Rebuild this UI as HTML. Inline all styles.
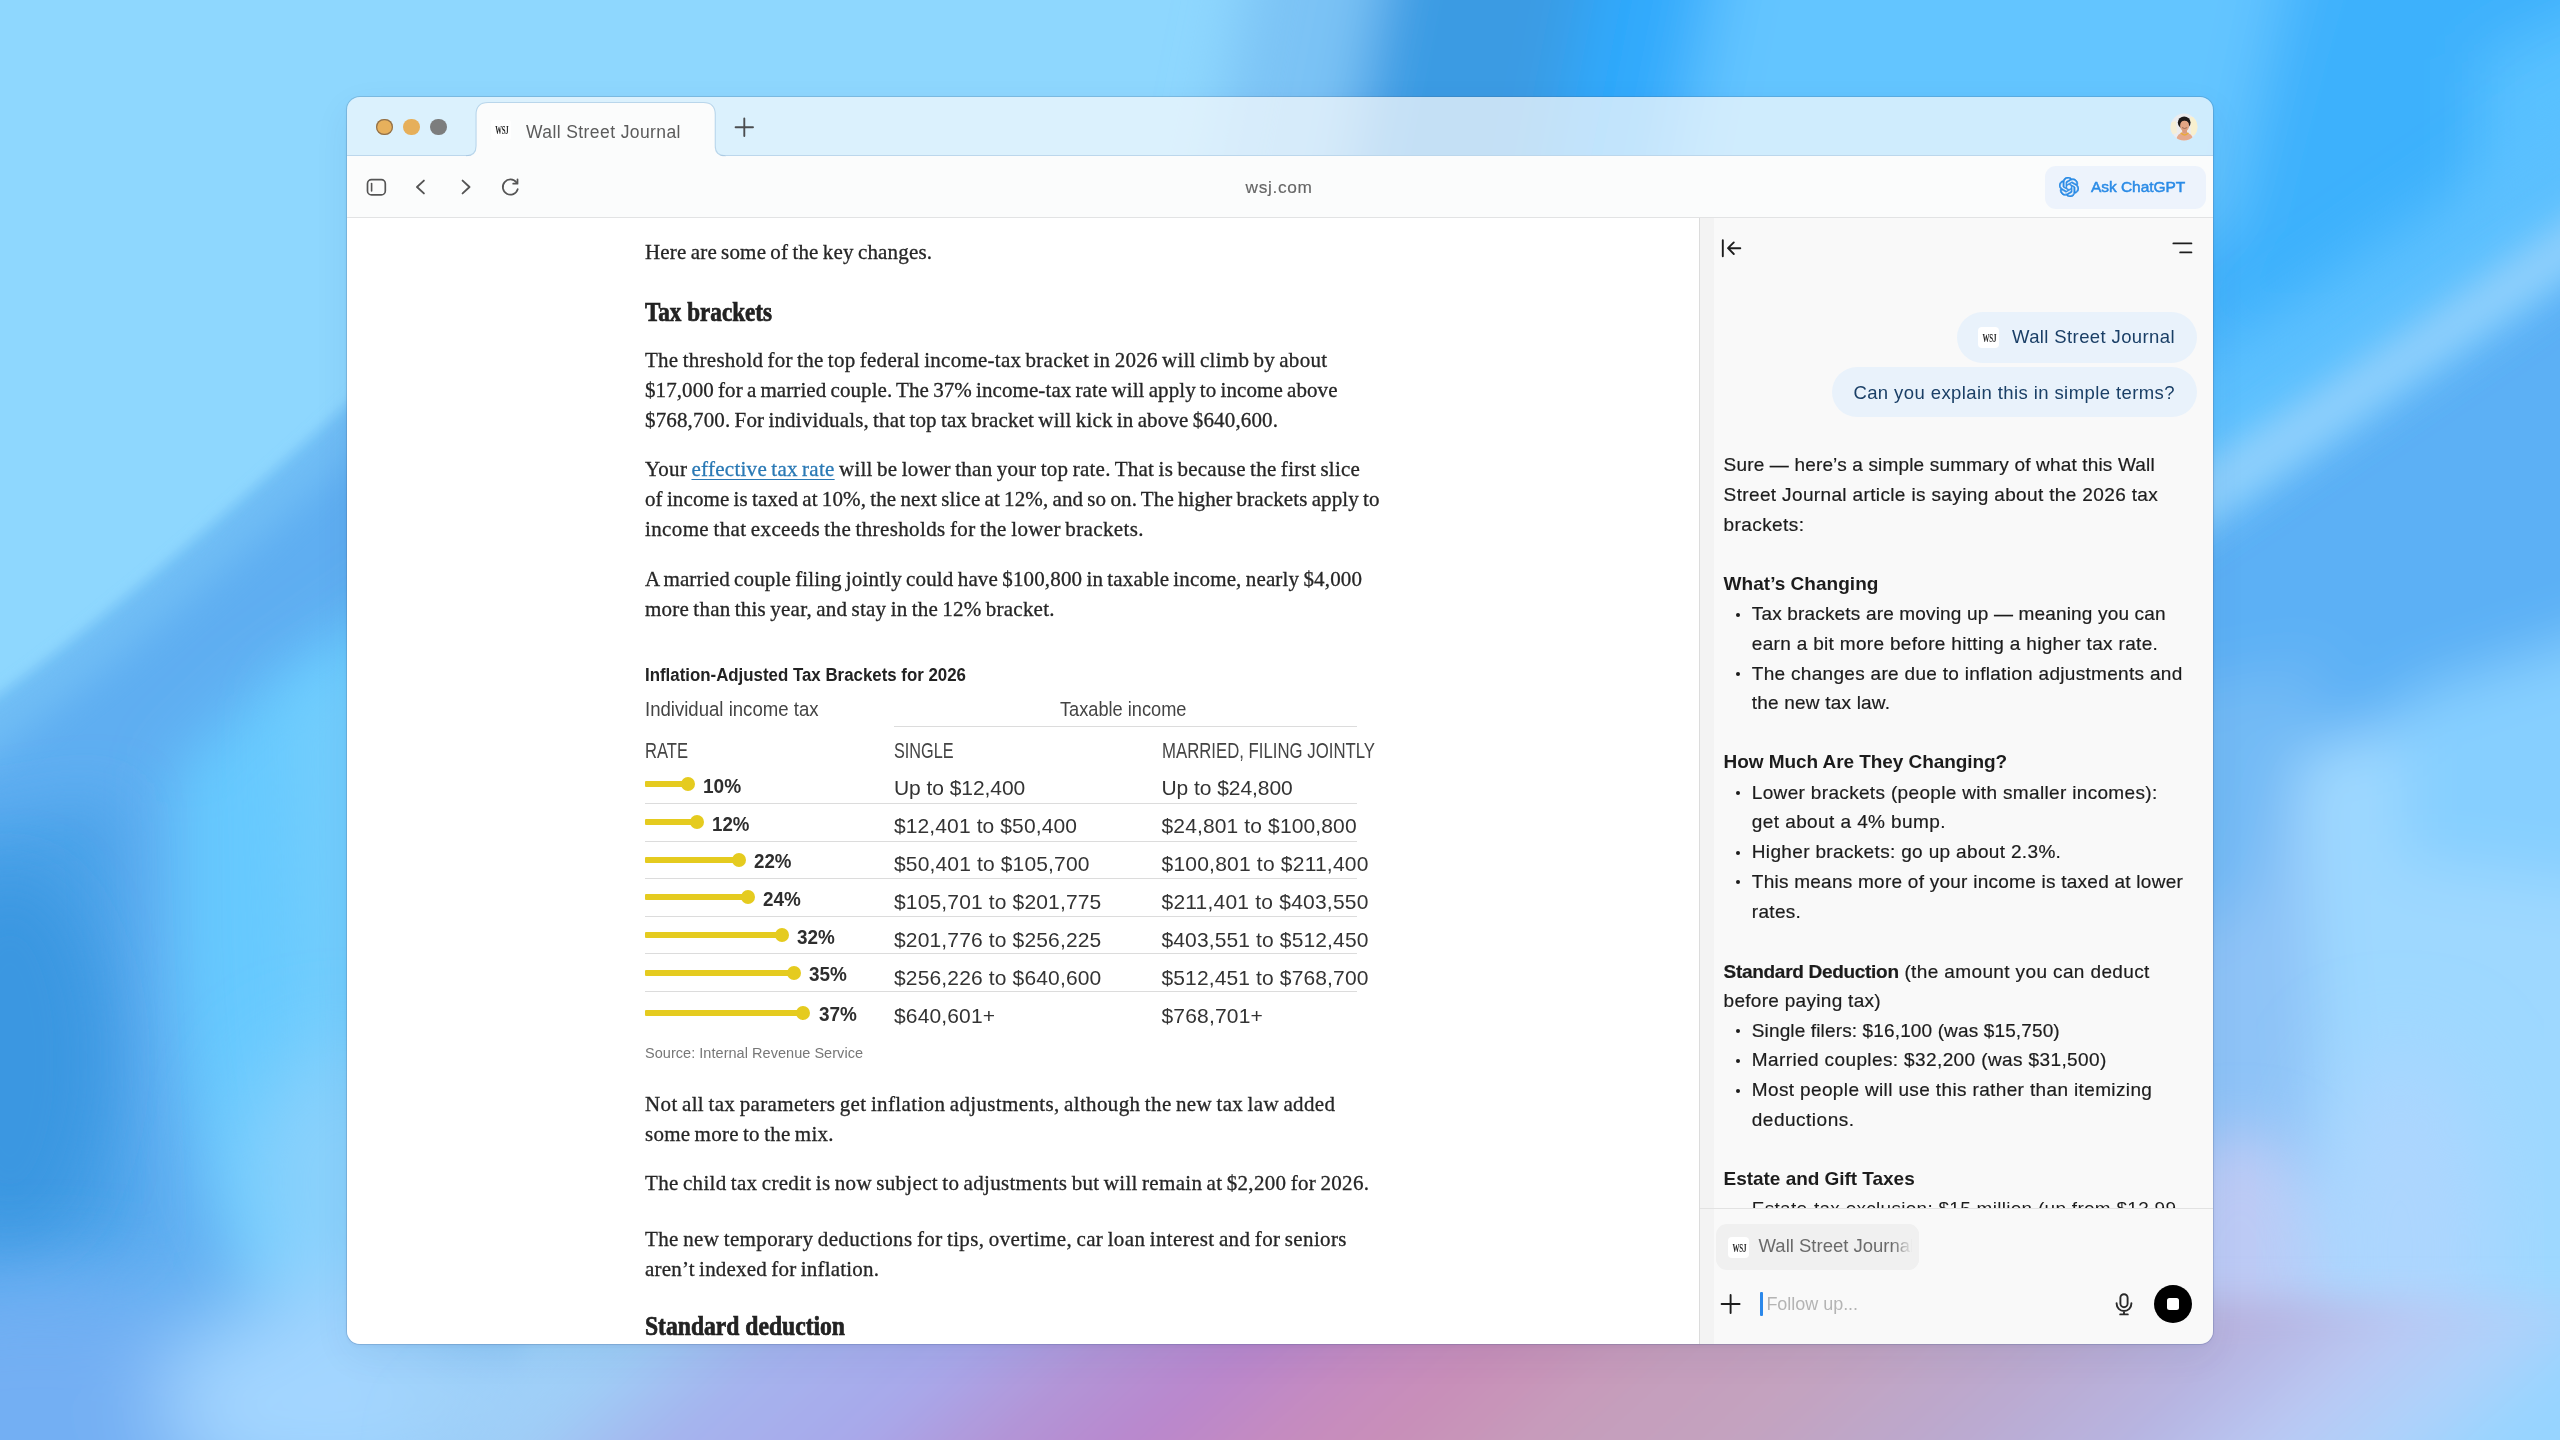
<!DOCTYPE html>
<html lang="en">
<head>
<meta charset="utf-8">
<title>Wall Street Journal</title>
<style>
html,body{margin:0;padding:0;width:2560px;height:1440px;overflow:hidden;background:#8ed7fe;}
body{position:relative;font-family:"Liberation Sans",sans-serif;}
#bg{position:absolute;left:0;top:0;width:2560px;height:1440px;}
#win{will-change:transform;position:absolute;left:347px;top:97px;width:1866px;height:1247px;border-radius:13px;overflow:hidden;background:transparent;
 box-shadow:0 0 0 1px rgba(60,90,130,.22),0 12px 36px rgba(20,50,110,.07),0 2px 6px rgba(20,50,110,.05);}
#stage{position:absolute;left:-347px;top:-97px;width:2560px;height:1440px;}
#stage>*,#stage .abs,.grp>*{position:absolute;}
.grp{left:0;top:0;width:0;height:0;margin:0;}
.l{position:absolute;white-space:pre;transform-origin:0 50%;margin:0;}
.sf{font-family:"Liberation Serif",serif;}
.ss{font-family:"Liberation Sans",sans-serif;}
.l a{color:#2a79b5;-webkit-text-stroke-color:#2a79b5;text-decoration:underline;text-decoration-thickness:1px;text-underline-offset:3px;}
#tabbar{left:347px;top:97px;width:1866px;height:59px;background:rgba(250,251,252,.72);}
#tabline{left:347px;top:155px;width:1866px;height:1px;background:#bcd7ec;}
#toolbar{left:347px;top:156px;width:1866px;height:61px;background:#fbfcfc;}
#toolline{left:347px;top:217px;width:1866px;height:1px;background:#e2e3e4;}
#page{left:347px;top:218px;width:1352px;height:1126px;background:#fff;}
#panel{left:1700px;top:218px;width:513px;height:1126px;background:#f9f9f9;}
#panedge{left:1699px;top:218px;width:1px;height:1126px;background:#dcdcdc;}
#panband{left:1700px;top:218px;width:14px;height:1126px;background:#f3f3f3;}
.dot{position:absolute;width:16.6px;height:16.6px;border-radius:50%;top:118.7px;}
.fav{position:absolute;background:#fff;border-radius:3px;font-family:"Liberation Serif",serif;font-weight:700;color:#222;text-align:center;letter-spacing:-.3px;transform-origin:50% 50%;}
.fav span{display:inline-block;transform:scaleX(.56);margin-left:-1.5px;}
.chip{position:absolute;background:#e9f2fb;border-radius:26px;}
.hl{position:absolute;height:1px;background:#dcdcdc;left:645px;width:712px;}
.bar{position:absolute;left:645px;height:6px;background:#e5cb1f;border-radius:1px;}
.knob{position:absolute;width:14px;height:14px;border-radius:50%;background:#e5cb1f;}
.bu{position:absolute;left:1735.5px;width:4px;height:4px;border-radius:50%;background:#1c1c1c;}
#clip{left:1700px;top:218px;width:513px;height:990px;overflow:hidden;}
#clip>div{position:absolute;left:-1700px;top:-218px;width:2560px;height:1440px;}
</style>
</head>
<body>
<svg id="bg" width="2560" height="1440" viewBox="0 0 2560 1440" preserveAspectRatio="none">
<defs>
<filter id="b45" x="-30%" y="-30%" width="160%" height="160%"><feGaussianBlur stdDeviation="45"/></filter>
<filter id="b30" x="-30%" y="-30%" width="160%" height="160%"><feGaussianBlur stdDeviation="30"/></filter>
<filter id="b18" x="-30%" y="-30%" width="160%" height="160%"><feGaussianBlur stdDeviation="18"/></filter>
<filter id="b7" x="-30%" y="-30%" width="160%" height="160%"><feGaussianBlur stdDeviation="7"/></filter>
<linearGradient id="bot" x1="400" y1="1392" x2="1377" y2="2467" gradientUnits="userSpaceOnUse">
<stop offset="0.000" stop-color="#a0d2fd" stop-opacity="0"/>
<stop offset="0.086" stop-color="#9fcdf6"/>
<stop offset="0.148" stop-color="#a5b4ee"/>
<stop offset="0.238" stop-color="#a8a8ea"/>
<stop offset="0.305" stop-color="#b394d6"/>
<stop offset="0.367" stop-color="#b987cd"/>
<stop offset="0.429" stop-color="#c58bc0"/>
<stop offset="0.486" stop-color="#c98fb8"/>
<stop offset="0.558" stop-color="#c69dbb"/>
<stop offset="0.649" stop-color="#c3a3c0"/>
<stop offset="0.739" stop-color="#bba9cf"/>
<stop offset="0.830" stop-color="#b7b5e2"/>
<stop offset="0.894" stop-color="#b9c9f4"/>
<stop offset="0.949" stop-color="#add2fb"/>
<stop offset="1" stop-color="#97d4ff"/>
</linearGradient>
</defs>
<rect width="2560" height="1440" fill="#8ed7fe"/>
<!-- left: region below the diagonal edge -->
<path d="M-60 735 C40 672 190 552 420 338 L520 338 L520 1500 L-60 1500Z" fill="#70bdf5" filter="url(#b7)"/>
<path d="M-60 790 C40 726 190 606 420 396 L520 396 L520 1500 L-60 1500Z" fill="#5eaef1" filter="url(#b18)"/>
<path d="M175 770 L260 690 L520 510 L520 1300 L270 1300 Q170 1150 175 900Z" fill="#66c9fe" filter="url(#b30)"/>
<path d="M285 700 L520 560 L520 1120 L300 1120Z" fill="#72cdfd" filter="url(#b30)"/>
<path d="M-60 830 L115 800 L135 1250 L-60 1290Z" fill="#49a1e8" filter="url(#b30)"/>
<ellipse cx="10" cy="1060" rx="92" ry="185" fill="#3a97e1" filter="url(#b30)"/>
<g filter="url(#b45)">
<ellipse cx="40" cy="1435" rx="260" ry="150" fill="#73aff3"/>
<ellipse cx="345" cy="1180" rx="105" ry="130" fill="#8ad1fc"/>
<ellipse cx="350" cy="1400" rx="190" ry="115" fill="#a3d5ff"/>
<ellipse cx="540" cy="1410" rx="150" ry="90" fill="#a0d1f8"/>
</g>
<!-- top right -->
<g filter="url(#b30)">
<path d="M1470 -80 L2700 -80 L2700 420 L2120 420 L2120 230 L1380 230Z" fill="#48b5fd"/>
<path d="M1260 -80 L1400 -80 L1340 230 L1200 230Z" fill="#7cc3f5"/><path d="M1395 -80 L1600 -80 L1540 230 L1335 230Z" fill="#3b9be3"/>
<path d="M1600 -80 L1700 -80 L1640 230 L1540 230Z" fill="#2fa9fc"/>
<path d="M1740 -80 L2290 -80 L2230 230 L1680 230Z" fill="#63c5ff"/>
<path d="M2330 -80 L2700 -80 L2700 330 L2200 330Z" fill="#3db1fc"/>
<path d="M2480 60 L2700 -40 L2700 420 L2480 420Z" fill="#58c1ff"/>
</g>
<!-- right side -->
<g filter="url(#b30)">
<path d="M2120 545 L2700 150 L2700 700 L2120 790Z" fill="#5cb0f5"/>
<path d="M2120 800 L2700 640 L2700 1600 L2120 1600Z" fill="#9ed8ff"/>
<path d="M2120 800 L2300 760 L2330 1200 L2120 1200Z" fill="#8ec3f7"/>
<path d="M2120 700 L2330 660 L2250 900 L2120 960Z" fill="#72baf5"/>
<path d="M2400 700 L2700 600 L2700 900 L2400 860Z" fill="#86cfff"/>
</g>
<path d="M2150 400 L2620 80 L2620 215 L2150 535Z" fill="#5cc0fe" filter="url(#b30)"/>
<path d="M2150 503 L2620 183 L2620 243 L2150 563Z" fill="#90d0fc" filter="url(#b18)"/>
<ellipse cx="2240" cy="1340" rx="110" ry="210" fill="#bccaf5" filter="url(#b30)"/>
<ellipse cx="2400" cy="1250" rx="90" ry="200" fill="#add6fe" filter="url(#b45)"/>
<!-- bottom band -->
<rect x="400" y="1300" width="2260" height="200" fill="url(#bot)" filter="url(#b18)"/>
</svg>

<div id="win"><div id="stage">
<div id="tabbar"></div>
<div id="toolbar"></div>
<div id="tabline"></div>
<svg class="abs" style="left:456px;top:97px" width="280" height="60" viewBox="456 97 280 60"><path d="M466 156.3 Q476.6 156.3 476.6 146 V114.5 Q476.6 103 488.1 103 H703.2 Q714.7 103 714.7 114.5 V146 Q714.7 156.3 725.3 156.3" fill="none" stroke="#9dbfdc" stroke-opacity=".55" stroke-width="2.2"/><path d="M466 157 V156.3 Q476.6 156.3 476.6 146 V114.5 Q476.6 103 488.1 103 H703.2 Q714.7 103 714.7 114.5 V146 Q714.7 156.3 725.3 156.3 V157 Z" fill="#fbfcfc"/></svg>
<div id="toolline"></div>
<div class="dot" style="left:376.3px;background:#e7b05c;box-shadow:inset 0 0 0 1.2px rgba(120,95,70,.8)"></div>
<div class="dot" style="left:403.2px;background:#e6af5a"></div>
<div class="dot" style="left:430.3px;background:#7c7d7d"></div>
<div class="fav" style="left:491px;top:120px;width:20px;height:20px;font-size:12px;line-height:21px"><span>WSJ</span></div>
<svg class="abs" style="left:733px;top:116px" width="23" height="23" viewBox="0 0 23 23"><path d="M2.6 11.2H20M11.3 2.5V20" stroke="#4b4d50" stroke-width="1.9" stroke-linecap="round" fill="none"/></svg>
<!-- avatar -->
<svg class="abs" style="left:2169.5px;top:113.3px" width="28" height="28" viewBox="0 0 28 28"><defs><clipPath id="av"><circle cx="14" cy="14" r="13.4"/></clipPath></defs><g clip-path="url(#av)"><rect width="28" height="28" fill="#ececee"/><path d="M20 4 L28 4 L28 22 L21 22Z" fill="#f8f0cf"/><path d="M0 10 L6 8 L7 20 L0 22Z" fill="#f5eed6"/><ellipse cx="14.2" cy="9.6" rx="6.4" ry="6.2" fill="#1f1a1a"/><ellipse cx="14.6" cy="12.8" rx="4.5" ry="5.6" fill="#e3a584"/><path d="M9.8 9.6 Q14 5.4 19 9.4 Q18.6 5 14.2 4.6 Q10 5 9.8 9.6Z" fill="#1f1a1a"/><path d="M6 28 Q6.5 19.6 14.6 19.4 Q22.8 19.6 23.6 28Z" fill="#e5a98c"/><rect x="12.2" y="16.4" width="4.8" height="4" fill="#dc9c7c"/><path d="M10.8 19.8 Q14.6 24.2 18.4 19.8" fill="none" stroke="#e9a93a" stroke-width="1.5"/><path d="M12 14.6 Q14.6 16.4 17.2 14.6" fill="none" stroke="#8a5a48" stroke-width=".8"/></g></svg>
<!-- toolbar icons -->
<svg class="abs" style="left:364px;top:175px" width="26" height="24" viewBox="0 0 26 24"><rect x="3.5" y="4.7" width="17.8" height="15.2" rx="4" fill="none" stroke="#555" stroke-width="1.7"/><path d="M7.6 8.6V16" stroke="#555" stroke-width="1.6" stroke-linecap="round"/></svg>
<svg class="abs" style="left:410px;top:175px" width="22" height="24" viewBox="0 0 22 24"><path d="M13.9 5.6 L7 12 L13.9 18.4" fill="none" stroke="#555" stroke-width="1.9" stroke-linecap="round" stroke-linejoin="round"/></svg>
<svg class="abs" style="left:455px;top:175px" width="22" height="24" viewBox="0 0 22 24"><path d="M7.6 5.6 L14.5 12 L7.6 18.4" fill="none" stroke="#555" stroke-width="1.9" stroke-linecap="round" stroke-linejoin="round"/></svg>
<svg class="abs" style="left:499px;top:175px" width="24" height="24" viewBox="0 0 24 24"><path d="M18.7 14.2 A7.6 7.6 0 1 1 17.5 7.5" fill="none" stroke="#555" stroke-width="1.75" stroke-linecap="round"/><path d="M18.5 4.3 V8.7 H14.2" fill="none" stroke="#555" stroke-width="1.75" stroke-linecap="round" stroke-linejoin="round"/></svg>
<div class="abs" style="left:2044.5px;top:165.5px;width:161px;height:43px;border-radius:11px;background:#edf3fc"></div>
<svg class="abs" style="left:2059.2px;top:177.4px" width="20" height="20" viewBox="0 0 24 24"><path fill="#2b8be6" stroke="#2b8be6" stroke-width=".7" d="M22.2819 9.8211a5.9847 5.9847 0 0 0-.5157-4.9108 6.0462 6.0462 0 0 0-6.5098-2.9A6.0651 6.0651 0 0 0 4.9807 4.1818a5.9847 5.9847 0 0 0-3.9977 2.9 6.0462 6.0462 0 0 0 .7427 7.0966 5.98 5.98 0 0 0 .511 4.9107 6.051 6.051 0 0 0 6.5146 2.9001A5.9847 5.9847 0 0 0 13.2599 24a6.0557 6.0557 0 0 0 5.7718-4.2058 5.9894 5.9894 0 0 0 3.9977-2.9001 6.0557 6.0557 0 0 0-.7475-7.0729zm-9.022 12.6081a4.4755 4.4755 0 0 1-2.8764-1.0408l.1419-.0804 4.7783-2.7582a.7948.7948 0 0 0 .3927-.6813v-6.7369l2.02 1.1686a.071.071 0 0 1 .038.0615v5.5826a4.504 4.504 0 0 1-4.4945 4.4849zm-9.6607-4.1254a4.4708 4.4708 0 0 1-.5346-3.0137l.142.0852 4.783 2.7582a.7712.7712 0 0 0 .7806 0l5.8428-3.3685v2.3324a.0804.0804 0 0 1-.0332.0615L9.74 19.9502a4.4992 4.4992 0 0 1-6.1408-1.6464zM2.3408 7.8956a4.485 4.485 0 0 1 2.3655-1.9728V11.6a.7664.7664 0 0 0 .3879.6765l5.8144 3.3543-2.0201 1.1685a.0757.0757 0 0 1-.071 0l-4.8303-2.7865A4.504 4.504 0 0 1 2.3408 7.872zm16.5963 3.8558L13.1038 8.364 15.1192 7.2a.0757.0757 0 0 1 .071 0l4.8303 2.7913a4.4944 4.4944 0 0 1-.6765 8.1042v-5.6772a.79.79 0 0 0-.407-.667zm2.0107-3.0231l-.142-.0852-4.7735-2.7818a.7759.7759 0 0 0-.7854 0L9.409 9.2297V6.8974a.0662.0662 0 0 1 .0284-.0615l4.8303-2.7866a4.4992 4.4992 0 0 1 6.6802 4.66zM8.3065 12.863l-2.02-1.1638a.0804.0804 0 0 1-.038-.0567V6.0742a4.4992 4.4992 0 0 1 7.3757-3.4537l-.142.0805L8.704 5.459a.7948.7948 0 0 0-.3927.6813zm1.0976-2.3654l2.602-1.4998 2.6069 1.4998v2.9994l-2.5974 1.4997-2.6067-1.4997Z"/></svg>
<div class="l ss" style="left:526.0px;top:120.0px;font-size:17.5px;line-height:24px;color:#5b5b5b;letter-spacing:0.406px;">Wall Street Journal</div>
<div class="l ss" style="left:1245.5px;top:175.0px;font-size:17.3px;line-height:24px;color:#666;letter-spacing:0.680px;-webkit-text-stroke:.15px #666;">wsj.com</div>
<div class="l ss" style="left:2091.0px;top:176.0px;font-size:15.5px;line-height:22px;color:#2b8be6;letter-spacing:-0.055px;-webkit-text-stroke:.5px #2b8be6;">Ask ChatGPT</div>
<div id="page"></div>
<article class="grp">
<div class="l sf" style="left:645.0px;top:238.0px;font-size:21px;line-height:29px;color:#262626;letter-spacing:0.174px;word-spacing:-1.2px;-webkit-text-stroke:.3px #262626;">Here are some of the key changes.</div>
<div class="l sf" style="left:645.0px;top:293.0px;font-size:27px;line-height:38px;color:#222;font-weight:700;transform:scaleX(0.8566);-webkit-text-stroke:.7px #222;">Tax brackets</div>
<div class="l sf" style="left:645.0px;top:346.0px;font-size:21px;line-height:29px;color:#262626;letter-spacing:0.260px;word-spacing:-1.2px;-webkit-text-stroke:.3px #262626;">The threshold for the top federal income-tax bracket in 2026 will climb by about</div>
<div class="l sf" style="left:645.0px;top:376.0px;font-size:21px;line-height:29px;color:#262626;letter-spacing:0.088px;word-spacing:-1.2px;-webkit-text-stroke:.3px #262626;">$17,000 for a married couple. The 37% income-tax rate will apply to income above</div>
<div class="l sf" style="left:645.0px;top:406.0px;font-size:21px;line-height:29px;color:#262626;letter-spacing:0.155px;word-spacing:-1.2px;-webkit-text-stroke:.3px #262626;">$768,700. For individuals, that top tax bracket will kick in above $640,600.</div>
<div class="l sf" style="left:645.0px;top:455.0px;font-size:21px;line-height:29px;color:#262626;letter-spacing:0.271px;word-spacing:-1.2px;-webkit-text-stroke:.3px #262626;">Your <a>effective tax rate</a> will be lower than your top rate. That is because the first slice</div>
<div class="l sf" style="left:645.0px;top:485.0px;font-size:21px;line-height:29px;color:#262626;letter-spacing:0.121px;word-spacing:-1.2px;-webkit-text-stroke:.3px #262626;">of income is taxed at 10%, the next slice at 12%, and so on. The higher brackets apply to</div>
<div class="l sf" style="left:645.0px;top:515.0px;font-size:21px;line-height:29px;color:#262626;letter-spacing:0.372px;word-spacing:-1.2px;-webkit-text-stroke:.3px #262626;">income that exceeds the thresholds for the lower brackets.</div>
<div class="l sf" style="left:645.0px;top:565.0px;font-size:21px;line-height:29px;color:#262626;letter-spacing:0.162px;word-spacing:-1.2px;-webkit-text-stroke:.3px #262626;">A married couple filing jointly could have $100,800 in taxable income, nearly $4,000</div>
<div class="l sf" style="left:645.0px;top:595.0px;font-size:21px;line-height:29px;color:#262626;letter-spacing:0.233px;word-spacing:-1.2px;-webkit-text-stroke:.3px #262626;">more than this year, and stay in the 12% bracket.</div>
<div class="l sf" style="left:645.0px;top:1090.0px;font-size:21px;line-height:29px;color:#262626;letter-spacing:0.361px;word-spacing:-1.2px;-webkit-text-stroke:.3px #262626;">Not all tax parameters get inflation adjustments, although the new tax law added</div>
<div class="l sf" style="left:645.0px;top:1120.0px;font-size:21px;line-height:29px;color:#262626;letter-spacing:0.245px;word-spacing:-1.2px;-webkit-text-stroke:.3px #262626;">some more to the mix.</div>
<div class="l sf" style="left:645.0px;top:1169.0px;font-size:21px;line-height:29px;color:#262626;letter-spacing:0.310px;word-spacing:-1.2px;-webkit-text-stroke:.3px #262626;">The child tax credit is now subject to adjustments but will remain at $2,200 for 2026.</div>
<div class="l sf" style="left:645.0px;top:1225.0px;font-size:21px;line-height:29px;color:#262626;letter-spacing:0.372px;word-spacing:-1.2px;-webkit-text-stroke:.3px #262626;">The new temporary deductions for tips, overtime, car loan interest and for seniors</div>
<div class="l sf" style="left:645.0px;top:1255.0px;font-size:21px;line-height:29px;color:#262626;letter-spacing:0.210px;word-spacing:-1.2px;-webkit-text-stroke:.3px #262626;">aren’t indexed for inflation.</div>
<div class="l sf" style="left:645.0px;top:1307.0px;font-size:27px;line-height:38px;color:#222;font-weight:700;transform:scaleX(0.8740);-webkit-text-stroke:.7px #222;">Standard deduction</div>
</article>
<section class="grp" id="tax-table">
<div class="hl" style="left:893.5px;width:463px;top:725.5px"></div>
<div class="hl" style="top:803px"></div>
<div class="hl" style="top:841px"></div>
<div class="hl" style="top:878px"></div>
<div class="hl" style="top:916px"></div>
<div class="hl" style="top:953px"></div>
<div class="hl" style="top:991px"></div>
<div class="bar" style="top:781.3px;width:43.0px"></div><div class="knob" style="left:681.0px;top:777.3px"></div>
<div class="bar" style="top:818.8px;width:51.8px"></div><div class="knob" style="left:689.8px;top:814.8px"></div>
<div class="bar" style="top:856.5px;width:93.9px"></div><div class="knob" style="left:731.9px;top:852.5px"></div>
<div class="bar" style="top:894.4px;width:103.0px"></div><div class="knob" style="left:741.0px;top:890.4px"></div>
<div class="bar" style="top:932.0px;width:136.8px"></div><div class="knob" style="left:774.8px;top:928.0px"></div>
<div class="bar" style="top:969.6px;width:149.2px"></div><div class="knob" style="left:787.2px;top:965.6px"></div>
<div class="bar" style="top:1009.9px;width:158.0px"></div><div class="knob" style="left:796.0px;top:1005.9px"></div>
<div class="l ss" style="left:645.0px;top:663.0px;font-size:17.6px;line-height:25px;color:#222;font-weight:700;transform:scaleX(0.9581);">Inflation-Adjusted Tax Brackets for 2026</div>
<div class="l ss" style="left:645.0px;top:696.0px;font-size:19.3px;line-height:27px;color:#444;transform:scaleX(0.9636);">Individual income tax</div>
<div class="l ss" style="left:1060.0px;top:696.0px;font-size:19.3px;line-height:27px;color:#444;transform:scaleX(0.9441);">Taxable income</div>
<div class="l ss" style="left:645.0px;top:736.0px;font-size:21.5px;line-height:30px;color:#444;transform:scaleX(0.7713);">RATE</div>
<div class="l ss" style="left:894.0px;top:736.0px;font-size:21.5px;line-height:30px;color:#444;transform:scaleX(0.7544);">SINGLE</div>
<div class="l ss" style="left:1161.5px;top:736.0px;font-size:21.5px;line-height:30px;color:#444;transform:scaleX(0.7797);">MARRIED, FILING JOINTLY</div>
<div class="l ss" style="left:702.8px;top:772.0px;font-size:20px;line-height:28px;color:#2e2e2e;font-weight:700;transform:scaleX(0.9543);">10%</div>
<div class="l ss" style="left:894.0px;top:773.0px;font-size:21px;line-height:29px;color:#333;letter-spacing:-0.053px;">Up to $12,400</div>
<div class="l ss" style="left:1161.5px;top:773.0px;font-size:21px;line-height:29px;color:#333;letter-spacing:-0.053px;">Up to $24,800</div>
<div class="l ss" style="left:711.6px;top:810.0px;font-size:20px;line-height:28px;color:#2e2e2e;font-weight:700;transform:scaleX(0.9343);">12%</div>
<div class="l ss" style="left:894.0px;top:811.0px;font-size:21px;line-height:29px;color:#333;letter-spacing:0.111px;">$12,401 to $50,400</div>
<div class="l ss" style="left:1161.5px;top:811.0px;font-size:21px;line-height:29px;color:#333;letter-spacing:0.134px;">$24,801 to $100,800</div>
<div class="l ss" style="left:753.8px;top:847.0px;font-size:20px;line-height:28px;color:#2e2e2e;font-weight:700;transform:scaleX(0.9368);">22%</div>
<div class="l ss" style="left:894.0px;top:849.0px;font-size:21px;line-height:29px;color:#333;letter-spacing:0.151px;">$50,401 to $105,700</div>
<div class="l ss" style="left:1161.5px;top:849.0px;font-size:21px;line-height:29px;color:#333;letter-spacing:0.215px;">$100,801 to $211,400</div>
<div class="l ss" style="left:762.8px;top:885.0px;font-size:20px;line-height:28px;color:#2e2e2e;font-weight:700;transform:scaleX(0.9443);">24%</div>
<div class="l ss" style="left:894.0px;top:887.0px;font-size:21px;line-height:29px;color:#333;letter-spacing:0.151px;">$105,701 to $201,775</div>
<div class="l ss" style="left:1161.5px;top:887.0px;font-size:21px;line-height:29px;color:#333;letter-spacing:0.215px;">$211,401 to $403,550</div>
<div class="l ss" style="left:796.6px;top:923.0px;font-size:20px;line-height:28px;color:#2e2e2e;font-weight:700;transform:scaleX(0.9443);">32%</div>
<div class="l ss" style="left:894.0px;top:925.0px;font-size:21px;line-height:29px;color:#333;letter-spacing:0.151px;">$201,776 to $256,225</div>
<div class="l ss" style="left:1161.5px;top:925.0px;font-size:21px;line-height:29px;color:#333;letter-spacing:0.133px;">$403,551 to $512,450</div>
<div class="l ss" style="left:809.0px;top:960.0px;font-size:20px;line-height:28px;color:#2e2e2e;font-weight:700;transform:scaleX(0.9468);">35%</div>
<div class="l ss" style="left:894.0px;top:963.0px;font-size:21px;line-height:29px;color:#333;letter-spacing:0.151px;">$256,226 to $640,600</div>
<div class="l ss" style="left:1161.5px;top:963.0px;font-size:21px;line-height:29px;color:#333;letter-spacing:0.133px;">$512,451 to $768,700</div>
<div class="l ss" style="left:819.0px;top:1000.0px;font-size:20px;line-height:28px;color:#2e2e2e;font-weight:700;transform:scaleX(0.9468);">37%</div>
<div class="l ss" style="left:894.0px;top:1001.0px;font-size:21px;line-height:29px;color:#333;letter-spacing:0.143px;">$640,601+</div>
<div class="l ss" style="left:1161.5px;top:1001.0px;font-size:21px;line-height:29px;color:#333;letter-spacing:0.180px;">$768,701+</div>
<div class="l ss" style="left:645.0px;top:1043.0px;font-size:14.5px;line-height:20px;color:#777;letter-spacing:0.038px;">Source: Internal Revenue Service</div>
</section>
<aside class="grp" id="chat-panel">
<div id="panel"></div>
<div id="panband"></div>
<div id="panedge"></div>
<svg class="abs" style="left:1718px;top:236px" width="26" height="24" viewBox="0 0 26 24"><path d="M4.8 4.2V20.2M22.3 12.2H10.2M15.8 6.4 L10 12.2 L15.8 18" fill="none" stroke="#1d1d1d" stroke-width="1.9" stroke-linecap="round" stroke-linejoin="round"/></svg>
<svg class="abs" style="left:2168px;top:236px" width="28" height="24" viewBox="0 0 28 24"><path d="M5.4 7.4H23.4M12.2 16.4H23.4" fill="none" stroke="#1d1d1d" stroke-width="1.9" stroke-linecap="round"/></svg>
<div class="chip" style="left:1957px;top:312px;width:240px;height:50.5px"></div>
<div class="fav" style="left:1978px;top:327px;width:21px;height:21px;font-size:12.5px;line-height:22px;border-radius:4px"><span>WSJ</span></div>
<div class="chip" style="left:1832px;top:366.5px;width:365px;height:50px"></div>
<i class="bu" style="top:612.8px"></i>
<i class="bu" style="top:672.2px"></i>
<i class="bu" style="top:791.2px"></i>
<i class="bu" style="top:850.6px"></i>
<i class="bu" style="top:880.3px"></i>
<i class="bu" style="top:1029.1px"></i>
<i class="bu" style="top:1058.8px"></i>
<i class="bu" style="top:1088.5px"></i>
<div class="l ss" style="left:2012.0px;top:324.0px;font-size:18.5px;line-height:26px;color:#1a3f66;letter-spacing:0.383px;">Wall Street Journal</div>
<div class="l ss" style="left:1853.4px;top:380.0px;font-size:18.5px;line-height:26px;color:#1a3f66;letter-spacing:0.408px;">Can you explain this in simple terms?</div>
<div class="l ss" style="left:1723.6px;top:451.0px;font-size:19px;line-height:27px;color:#1c1c1c;letter-spacing:0.163px;-webkit-text-stroke:.2px #1c1c1c;">Sure — here’s a simple summary of what this Wall</div>
<div class="l ss" style="left:1723.6px;top:481.0px;font-size:19px;line-height:27px;color:#1c1c1c;letter-spacing:0.361px;-webkit-text-stroke:.2px #1c1c1c;">Street Journal article is saying about the 2026 tax</div>
<div class="l ss" style="left:1723.6px;top:511.0px;font-size:19px;line-height:27px;color:#1c1c1c;letter-spacing:0.413px;-webkit-text-stroke:.2px #1c1c1c;">brackets:</div>
<div class="l ss" style="left:1723.6px;top:570.0px;font-size:19px;line-height:27px;color:#1c1c1c;font-weight:700;letter-spacing:0.025px;">What’s Changing</div>
<div class="l ss" style="left:1751.8px;top:600.0px;font-size:19px;line-height:27px;color:#1c1c1c;letter-spacing:0.167px;-webkit-text-stroke:.2px #1c1c1c;">Tax brackets are moving up — meaning you can</div>
<div class="l ss" style="left:1751.8px;top:630.0px;font-size:19px;line-height:27px;color:#1c1c1c;letter-spacing:0.317px;-webkit-text-stroke:.2px #1c1c1c;">earn a bit more before hitting a higher tax rate.</div>
<div class="l ss" style="left:1751.8px;top:660.0px;font-size:19px;line-height:27px;color:#1c1c1c;letter-spacing:0.303px;-webkit-text-stroke:.2px #1c1c1c;">The changes are due to inflation adjustments and</div>
<div class="l ss" style="left:1751.8px;top:689.0px;font-size:19px;line-height:27px;color:#1c1c1c;letter-spacing:0.200px;-webkit-text-stroke:.2px #1c1c1c;">the new tax law.</div>
<div class="l ss" style="left:1723.6px;top:748.0px;font-size:19px;line-height:27px;color:#1c1c1c;font-weight:700;letter-spacing:-0.068px;">How Much Are They Changing?</div>
<div class="l ss" style="left:1751.8px;top:779.0px;font-size:19px;line-height:27px;color:#1c1c1c;letter-spacing:0.334px;-webkit-text-stroke:.2px #1c1c1c;">Lower brackets (people with smaller incomes):</div>
<div class="l ss" style="left:1751.8px;top:808.0px;font-size:19px;line-height:27px;color:#1c1c1c;letter-spacing:0.415px;-webkit-text-stroke:.2px #1c1c1c;">get about a 4% bump.</div>
<div class="l ss" style="left:1751.8px;top:838.0px;font-size:19px;line-height:27px;color:#1c1c1c;letter-spacing:0.341px;-webkit-text-stroke:.2px #1c1c1c;">Higher brackets: go up about 2.3%.</div>
<div class="l ss" style="left:1751.8px;top:868.0px;font-size:19px;line-height:27px;color:#1c1c1c;letter-spacing:0.250px;-webkit-text-stroke:.2px #1c1c1c;">This means more of your income is taxed at lower</div>
<div class="l ss" style="left:1751.8px;top:898.0px;font-size:19px;line-height:27px;color:#1c1c1c;letter-spacing:0.314px;-webkit-text-stroke:.2px #1c1c1c;">rates.</div>
<div class="l ss" style="left:1723.6px;top:958.0px;font-size:19px;line-height:27px;color:#1c1c1c;letter-spacing:0.379px;-webkit-text-stroke:.2px #1c1c1c;"><b style="letter-spacing:-.3px">Standard Deduction</b> (the amount you can deduct</div>
<div class="l ss" style="left:1723.6px;top:987.0px;font-size:19px;line-height:27px;color:#1c1c1c;letter-spacing:0.289px;-webkit-text-stroke:.2px #1c1c1c;">before paying tax)</div>
<div class="l ss" style="left:1751.8px;top:1017.0px;font-size:19px;line-height:27px;color:#1c1c1c;letter-spacing:0.136px;-webkit-text-stroke:.2px #1c1c1c;">Single filers: $16,100 (was $15,750)</div>
<div class="l ss" style="left:1751.8px;top:1046.0px;font-size:19px;line-height:27px;color:#1c1c1c;letter-spacing:0.388px;-webkit-text-stroke:.2px #1c1c1c;">Married couples: $32,200 (was $31,500)</div>
<div class="l ss" style="left:1751.8px;top:1076.0px;font-size:19px;line-height:27px;color:#1c1c1c;letter-spacing:0.364px;-webkit-text-stroke:.2px #1c1c1c;">Most people will use this rather than itemizing</div>
<div class="l ss" style="left:1751.8px;top:1106.0px;font-size:19px;line-height:27px;color:#1c1c1c;letter-spacing:0.501px;-webkit-text-stroke:.2px #1c1c1c;">deductions.</div>
<div class="l ss" style="left:1723.6px;top:1165.0px;font-size:19px;line-height:27px;color:#1c1c1c;font-weight:700;letter-spacing:-0.036px;">Estate and Gift Taxes</div>
<div class="l ss" style="left:1766.4px;top:1292.0px;font-size:18px;line-height:25px;color:#b4b4b4;letter-spacing:-0.032px;">Follow up...</div>
<div id="clip"><div>
<i class="bu" style="top:1207.7px"></i>
<div class="l ss" style="left:1751.8px;top:1195.0px;font-size:19px;line-height:27px;color:#1c1c1c;letter-spacing:0.279px;">Estate-tax exclusion: $15 million (up from $13.99</div>
</div></div>
<div class="abs" style="left:1700px;top:1208px;width:513px;height:1px;background:#e2e2e2"></div>
<div class="abs" style="left:1715.5px;top:1224px;width:203px;height:45.5px;border-radius:11px;background:#f0f0f0;overflow:hidden">
 <div class="fav" style="left:12.5px;top:12.5px;width:21px;height:21px;font-size:12.5px;line-height:22px;border-radius:4px"><span>WSJ</span></div>
 <div style="position:absolute;left:-1715.5px;top:-1224px;width:2560px;height:1440px"><div class="l ss" style="left:1758.6px;top:1233.0px;font-size:18.5px;line-height:26px;color:#6a6a6a;">Wall Street Journal</div></div>
 <div style="position:absolute;right:0;top:0;width:26px;height:100%;background:linear-gradient(90deg,rgba(240,240,240,0),#f0f0f0 75%)"></div>
</div>
<svg class="abs" style="left:1718px;top:1292px" width="26" height="24" viewBox="0 0 26 24"><path d="M3.6 12H21.6M12.6 3V21" stroke="#1d1d1d" stroke-width="1.9" stroke-linecap="round" fill="none"/></svg>
<div class="abs" style="left:1760.3px;top:1291.5px;width:3px;height:24px;background:#2b88ea;border-radius:1px"></div>
<svg class="abs" style="left:2112px;top:1291px" width="24" height="26" viewBox="0 0 24 26"><rect x="8.4" y="3.2" width="7.2" height="13" rx="3.6" fill="none" stroke="#2a2a2a" stroke-width="1.9"/><path d="M4.6 12.2 V12.6 A7.4 7.4 0 0 0 19.4 12.6 V12.2 M12 20 V23.4 M8.2 23.4 H15.8" fill="none" stroke="#2a2a2a" stroke-width="1.9" stroke-linecap="round"/></svg>
<div class="abs" style="left:2154px;top:1285px;width:38px;height:38px;border-radius:50%;background:#000"></div>
<div class="abs" style="left:2166.7px;top:1297.7px;width:12.6px;height:12.6px;border-radius:2.5px;background:#fff"></div>
</aside>
</div></div>
</body>
</html>
